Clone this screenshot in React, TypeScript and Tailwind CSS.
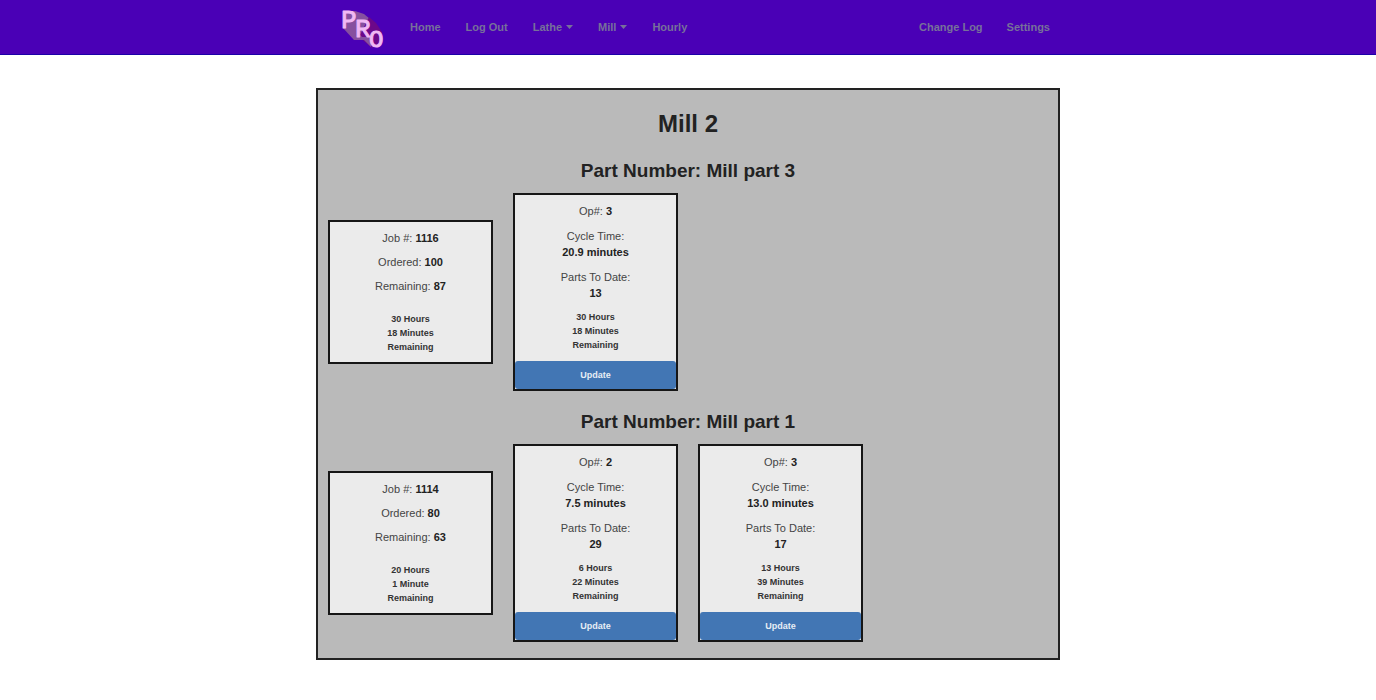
type Operation = {
  op: number;
  cycle: string;
  parts: number;
  time: string[];
};

type Part = {
  name: string;
  job: number;
  ordered: number;
  remaining: number;
  time: string[];
  operations: Operation[];
};

const parts: Part[] = [
  {
    name: "Mill part 3",
    job: 1116,
    ordered: 100,
    remaining: 87,
    time: ["30 Hours", "18 Minutes"],
    operations: [{ op: 3, cycle: "20.9", parts: 13, time: ["30 Hours", "18 Minutes"] }],
  },
  {
    name: "Mill part 1",
    job: 1114,
    ordered: 80,
    remaining: 63,
    time: ["20 Hours", "1 Minute"],
    operations: [
      { op: 2, cycle: "7.5", parts: 29, time: ["6 Hours", "22 Minutes"] },
      { op: 3, cycle: "13.0", parts: 17, time: ["13 Hours", "39 Minutes"] },
    ],
  },
];

function Logo() {
  return (
    <svg
      width="48"
      height="54"
      viewBox="-3 -5 48 54"
      role="img"
      aria-label="PRO"
      fontFamily="'Liberation Mono', monospace"
      fontSize="26"
      fill="#f0b8f4"
      stroke="#f0b8f4"
      strokeWidth="1"
      strokeLinejoin="round"
    >
      <path d="M1 23 L4 6 H13 L22 9 L28 14 V35 H12 Z" fill="#86509f" stroke="none" />
      <path d="M17 32 L27 12 L34 18 L40 27 V38 L30 43 Z" fill="#6c0889" stroke="none" />
      <path d="M14 25 L20 32 H29 V42 L22 35 H12 Z" fill="#86509f" stroke="none" />
      <text x="-1" y="23">P</text>
      <text x="13" y="32">R</text>
      <text x="27" y="42" fontSize="24">O</text>
    </svg>
  );
}

function NavLink({ label, menu }: { label: string; menu?: boolean }) {
  return (
    <a href="#" className="flex items-center gap-1 px-3 py-4 font-bold text-[#77709a]">
      {label}
      {menu && (
        <svg width="7" height="4" viewBox="0 0 7 4" aria-hidden="true">
          <path d="M0 0H7L3.5 4Z" fill="currentColor" />
        </svg>
      )}
    </a>
  );
}

function TimeLeft({ lines }: { lines: string[] }) {
  return (
    <div className="text-[9px] leading-[14px] font-bold text-[#333]">
      {lines.map((line) => (
        <div key={line}>{line}</div>
      ))}
      <div>Remaining</div>
    </div>
  );
}

const cardClass = "border-2 border-[#161616] bg-[#ebebeb] text-center leading-4";

function JobCard({ part }: { part: Part }) {
  return (
    <div className={`${cardClass} py-2`}>
      <div className="mb-[18px] flex flex-col gap-2">
        <p>Job #: <strong className="text-[#222]">{part.job}</strong></p>
        <p>Ordered: <strong className="text-[#222]">{part.ordered}</strong></p>
        <p>Remaining: <strong className="text-[#222]">{part.remaining}</strong></p>
      </div>
      <TimeLeft lines={part.time} />
    </div>
  );
}

function OperationCard({ operation }: { operation: Operation }) {
  return (
    <div className={`${cardClass} flex flex-col gap-[9px] pt-2`}>
      <p>Op#: <strong className="text-[#222]">{operation.op}</strong></p>
      <p>
        Cycle Time:
        <strong className="block text-[#222]">{operation.cycle} minutes</strong>
      </p>
      <p>
        Parts To Date:
        <strong className="block text-[#222]">{operation.parts}</strong>
      </p>
      <TimeLeft lines={operation.time} />
      <button type="button" className="h-7 w-full rounded-[3px] bg-[#4276b4] text-[9px] font-bold text-[#e6edf5]">
        Update
      </button>
    </div>
  );
}

export default function App() {
  return (
    <div className="min-h-screen bg-white font-['Liberation_Sans',Arial,sans-serif] text-[11px] text-[#444]">
      <nav className="border-b border-[#1c00a8] bg-[#4a00b6]">
        <div className="mx-auto flex h-[54px] max-w-[748px] items-center gap-px pl-[25px]">
          <a href="#" className="mr-2.5 shrink-0">
            <Logo />
          </a>
          <NavLink label="Home" />
          <NavLink label="Log Out" />
          <NavLink label="Lathe" menu />
          <NavLink label="Mill" menu />
          <NavLink label="Hourly" />
          <div className="ml-auto flex">
            <NavLink label="Change Log" />
            <NavLink label="Settings" />
          </div>
        </div>
      </nav>

      <main className="mx-auto mt-[33px] max-w-[744px] border-2 border-[#222] bg-[#bababa] pt-5 pb-4">
        <h1 className="mb-[22px] text-center text-2xl leading-7 font-bold text-[#222]">Mill 2</h1>
        <div className="flex flex-col gap-5">
          {parts.map((part) => (
            <section key={part.job}>
              <h2 className="mb-[11px] text-center text-[19px] leading-[22px] font-bold text-[#222]">
                Part Number: {part.name}
              </h2>
              <div className="grid grid-cols-4 items-center gap-5 px-2.5">
                <JobCard part={part} />
                {part.operations.map((operation) => (
                  <OperationCard key={operation.op} operation={operation} />
                ))}
              </div>
            </section>
          ))}
        </div>
      </main>
    </div>
  );
}
